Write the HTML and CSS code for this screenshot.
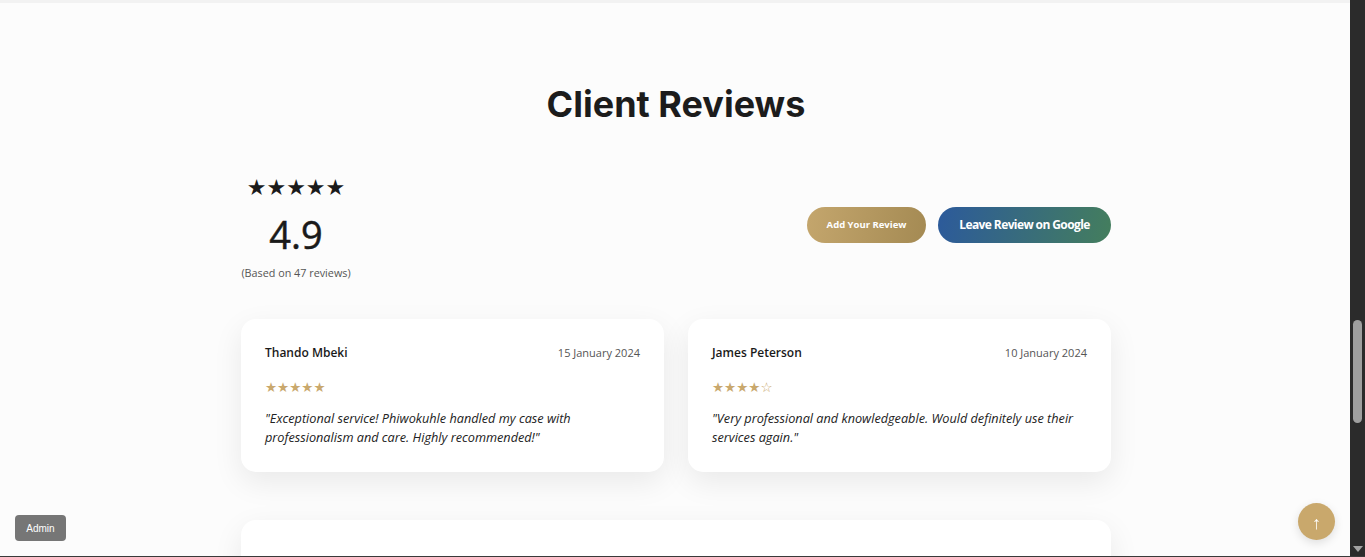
FILE: index.html
```html
<!DOCTYPE html>
<html lang="en">
<head>
<meta charset="utf-8">
<title>Client Reviews</title>
<link rel="stylesheet" href="styles.css">
</head>
<body>
<div class="viewport">
  <main class="page">
    <section class="reviews">
      <h2 class="title">Client Reviews</h2>
      <div class="summary">
        <div class="rating">
          <div class="rating-stars">★★★★★</div>
          <div class="rating-value">4.9</div>
          <div class="rating-count">(Based on 47 reviews)</div>
        </div>
        <div class="actions">
          <a class="btn btn-gold">Add Your Review</a>
          <a class="btn btn-google">Leave Review on Google</a>
        </div>
      </div>
      <div class="cards">
        <article class="card">
          <header class="card-head">
            <span class="name">Thando Mbeki</span>
            <span class="date">15 January 2024</span>
          </header>
          <div class="stars">★★★★★</div>
          <p class="quote">"Exceptional service! Phiwokuhle handled my case with professionalism and care. Highly recommended!"</p>
        </article>
        <article class="card">
          <header class="card-head">
            <span class="name">James Peterson</span>
            <span class="date">10 January 2024</span>
          </header>
          <div class="stars">★★★★☆</div>
          <p class="quote">"Very professional and knowledgeable. Would definitely use their services again."</p>
        </article>
        <article class="card card-wide"></article>
      </div>
    </section>
  </main>
  <div class="scrollbar">
    <div class="thumb"></div>
    <div class="arrow"></div>
  </div>
</div>
<div class="bottom-line"></div>
<a class="admin">Admin</a>
<a class="to-top">↑</a>
</body>
</html>
```
FILE: styles.css
```css
* { box-sizing: border-box; }
html, body { margin: 0; padding: 0; }
body {
  height: 557px;
  overflow: hidden;
  font-family: "Open Sans", "Liberation Sans", sans-serif;
  background: #fcfcfc;
  color: #1a1a1a;
}
.viewport {
  display: flex;
  height: 556px;
}
.page {
  flex: 1;
  overflow: hidden;
  background: #fcfcfc;
  border-top: 3px solid #f2f2f2;
  padding-left: 2px;
}
.reviews {
  width: 870px;
  margin: 0 auto;
  padding-top: 80px;
}
.title {
  margin: 0 0 48px;
  text-align: center;
  font-family: "Inter", "Liberation Sans", sans-serif;
  font-weight: 700;
  font-size: 36px;
  line-height: 43px;
  letter-spacing: 0;
  color: #1c1c1c;
}
.summary {
  display: flex;
  justify-content: space-between;
  align-items: center;
  margin-bottom: 38px;
}
.rating {
  display: flex;
  flex-direction: column;
  align-items: center;
  width: 110px;
}
.rating-stars {
  font-family: "DejaVu Sans", sans-serif;
  font-size: 22px;
  line-height: 24px;
  padding-top: 2px;
  height: 24px;
  color: #1a1a1a;
}
.rating-value {
  margin-top: 12px;
  font-size: 38px;
  line-height: 48px;
  font-weight: 500;
  color: #1a1a1a;
  -webkit-text-stroke: 0.5px #1a1a1a;
}
.rating-count {
  margin-top: 7px;
  font-size: 10.8px;
  line-height: 16px;
  color: #555;
  white-space: nowrap;
}
.actions {
  display: flex;
  gap: 12px;
  align-items: center;
  padding-bottom: 6px;
}
.btn {
  display: flex;
  align-items: center;
  justify-content: center;
  height: 36px;
  border-radius: 18px;
  color: #fff;
  white-space: nowrap;
}
.btn-gold {
  width: 119px;
  font-weight: 700;
  font-size: 9.5px;
  background: linear-gradient(100deg, #c4a66d 0%, #a48a53 100%);
}
.btn-google {
  width: 173px;
  font-weight: 700;
  font-size: 12px;
  letter-spacing: -0.6px;
  background: linear-gradient(100deg, #2c5a9b 0%, #447e5d 100%);
}
.cards {
  display: grid;
  grid-template-columns: 1fr 1fr;
  column-gap: 24px;
  row-gap: 48px;
}
.card {
  background: #fff;
  border-radius: 15px;
  padding: 24px 24px 25px;
  box-shadow: 0 10px 30px rgba(0, 0, 0, 0.08);
}
.card-wide {
  grid-column: 1 / -1;
  height: 150px;
}
.card-head {
  display: flex;
  justify-content: space-between;
  align-items: center;
  height: 18px;
}
.name {
  font-weight: 600;
  font-size: 12px;
  color: #1a1a1a;
}
.date {
  font-size: 11px;
  color: #555;
}
.stars {
  margin-top: 17px;
  font-family: "DejaVu Sans", sans-serif;
  font-size: 13.5px;
  line-height: 18px;
  color: #c9a86d;
}
.quote {
  margin: 13px 0 0;
  font-style: italic;
  font-size: 12.7px;
  line-height: 19px;
  color: #222;
}
.scrollbar {
  width: 15px;
  background: #2b2b2b;
  display: flex;
  flex-direction: column;
  align-items: center;
}
.thumb {
  margin-top: 320px;
  width: 9px;
  height: 103px;
  border-radius: 5px;
  background: #9f9f9f;
}
.arrow {
  margin-top: auto;
  margin-bottom: 4px;
  width: 0;
  height: 0;
  border-left: 5px solid transparent;
  border-right: 5px solid transparent;
  border-top: 6px solid #a3a3a3;
}
.bottom-line {
  height: 1px;
  background: #3a3a3a;
}
.admin {
  position: fixed;
  left: 15px;
  bottom: 16px;
  width: 51px;
  height: 26px;
  display: flex;
  align-items: center;
  justify-content: center;
  background: #767676;
  border-radius: 4px;
  color: #fff;
  font-family: "Liberation Sans", Arial, sans-serif;
  font-size: 10px;
}
.to-top {
  position: fixed;
  right: 30px;
  bottom: 17px;
  width: 37px;
  height: 37px;
  border-radius: 50%;
  background: #c9a86c;
  color: #fff;
  display: flex;
  align-items: center;
  justify-content: center;
  font-size: 18px;
  box-shadow: 0 3px 10px rgba(0, 0, 0, 0.12);
}
```
